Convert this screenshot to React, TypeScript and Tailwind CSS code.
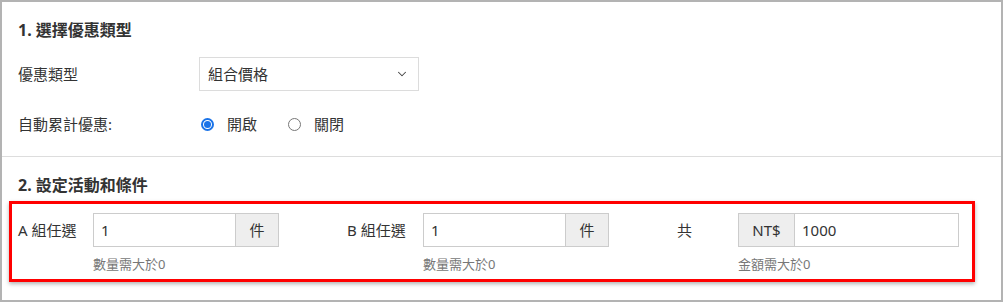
import React from 'react';
import { ChevronDown } from 'lucide-react';

const font = "font-['Noto_Sans','Noto_Sans_CJK_TC',sans-serif]";

const Radio = ({ checked, label }: { checked: boolean; label: string }) => (
  <label className="flex items-center">
    {checked ? (
      <span className="flex h-[13px] w-[13px] items-center justify-center rounded-full border-2 border-[#1a73e8]">
        <span className="h-[7px] w-[7px] rounded-full bg-[#1a73e8]" />
      </span>
    ) : (
      <span className="h-[13px] w-[13px] rounded-full border border-[#777]" />
    )}
    <span className="ml-[13px] text-[15px] text-[#333]">{label}</span>
  </label>
);

const InputGroup = ({
  value,
  addon,
  addonLeft,
  width,
  addonWidth,
  hint,
}: {
  value: string;
  addon: string;
  addonLeft?: boolean;
  width: string;
  addonWidth: string;
  hint: string;
}) => (
  <div className={width}>
    <div className="flex h-[34px] border border-[#ccc]">
      {addonLeft && (
        <span className={`flex items-center justify-center border-r border-[#ccc] bg-[#eee] text-[15px] text-[#333] ${addonWidth}`}>
          {addon}
        </span>
      )}
      <span className="flex flex-1 items-center pl-[7px] text-[15px] text-[#333]">{value}</span>
      {!addonLeft && (
        <span className={`flex items-center justify-center border-l border-[#ccc] bg-[#eee] text-[15px] text-[#333] ${addonWidth}`}>
          {addon}
        </span>
      )}
    </div>
    <p className="mt-[8px] text-[13px] leading-[18px] text-[#777]">{hint}</p>
  </div>
);

export default function App() {
  return (
    <div className={`h-[302px] w-[1003px] border-2 border-[#b3b3b3] bg-white ${font}`}>
      {/* section 1 */}
      <div className="border-b border-[#ddd] px-[16px] pt-[16px] pb-[20px]">
        <h2 className="text-[16px] font-bold leading-[24px] text-[#333]">1. 選擇優惠類型</h2>
        <div className="mt-[15px] flex items-center">
          <span className="w-[181px] text-[15px] text-[#333]">優惠類型</span>
          <div className="flex h-[34px] w-[220px] items-center justify-between border border-[#dcdcdc] pl-[8px] pr-[9px]">
            <span className="text-[15px] text-[#333]">組合價格</span>
            <ChevronDown size={14} strokeWidth={1.8} className="text-[#444]" />
          </div>
        </div>
        <div className="mt-[21px] flex h-[24px] items-center">
          <span className="w-[183px] text-[15px] text-[#333]">自動累計優惠:</span>
          <div className="flex items-center gap-[31px]">
            <Radio checked label="開啟" />
            <Radio checked={false} label="關閉" />
          </div>
        </div>
      </div>

      {/* section 2 */}
      <div className="px-[7px] pt-[16px]">
        <h2 className="pl-[9px] text-[16px] font-bold leading-[24px] text-[#333]">2. 設定活動和條件</h2>
        <div className="mt-[4px] flex w-[966px] border-[3px] border-[#ff0000] pt-[9px] pb-[6px] pl-[6px] shadow-[0_2px_4px_rgba(0,0,0,0.3)]">
          <div className="flex w-[329px] items-start">
            <span className="flex h-[34px] w-[75px] items-center text-[15px] text-[#333]">A 組任選</span>
            <InputGroup value="1" addon="件" width="w-[186px]" addonWidth="w-[43px]" hint="數量需大於0" />
          </div>
          <div className="flex w-[330px] items-start">
            <span className="flex h-[34px] w-[76px] items-center text-[15px] text-[#333]">B 組任選</span>
            <InputGroup value="1" addon="件" width="w-[186px]" addonWidth="w-[43px]" hint="數量需大於0" />
          </div>
          <div className="flex items-start">
            <span className="flex h-[34px] w-[61px] items-center text-[15px] text-[#333]">共</span>
            <InputGroup value="1000" addon="NT$" addonLeft width="w-[221px]" addonWidth="w-[56px]" hint="金額需大於0" />
          </div>
        </div>
      </div>
    </div>
  );
}
